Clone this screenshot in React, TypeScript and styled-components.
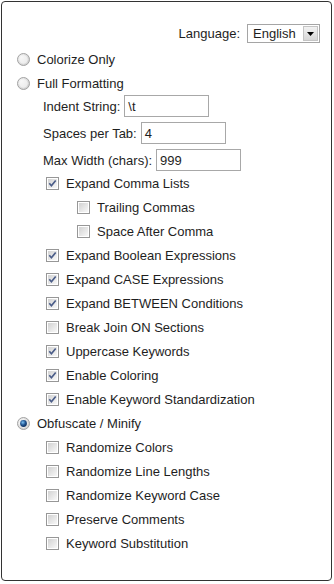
import React from "react";
import styled, { createGlobalStyle } from "styled-components";

const Global = createGlobalStyle`
  html, body { margin: 0; padding: 0; background: #fff; }
  body {
    font-family: "Liberation Sans", Arial, sans-serif;
    font-size: 13px;
    color: #1e1e1e;
  }
`;

const Panel = styled.div`
  box-sizing: border-box;
  margin: 1px 0 0 1px;
  width: 331px;
  height: 580px;
  border: 1px solid #333;
  border-radius: 4px;
  padding: 22px 11px 0 0;
  display: flex;
  flex-direction: column;
`;

const LangRow = styled.div`
  display: flex;
  justify-content: flex-end;
  align-items: center;
  gap: 7px;
  height: 19px;
  margin-bottom: 4px;
`;

const Select = styled.div`
  box-sizing: border-box;
  width: 73px;
  height: 19px;
  border: 1px solid #a5a5a5;
  display: flex;
  align-items: center;
  justify-content: space-between;
  padding: 0 1px 0 5px;
  background: #fff;
`;

const DropButton = styled.div`
  box-sizing: border-box;
  width: 15px;
  height: 15px;
  border: 1px solid #c4c4c4;
  background: linear-gradient(#f2f2f2, #d6d6d6);
  display: flex;
  align-items: center;
  justify-content: center;
`;

const Row = styled.div<{ $indent: number }>`
  display: flex;
  align-items: center;
  height: 24px;
  padding-left: ${(p) => p.$indent}px;
  gap: 7px;
`;

const InputGroup = styled.div`
  display: flex;
  flex-direction: column;
  gap: 5px;
`;

const InputRow = styled.div`
  display: flex;
  align-items: center;
  height: 22px;
  padding-left: 41px;
  gap: 4px;
`;

const TextBox = styled.div`
  box-sizing: border-box;
  width: 85px;
  height: 22px;
  border: 1px solid #a8a8a8;
  padding: 0 3px;
  display: flex;
  align-items: center;
  background: #fff;
`;

const Label = styled.span`
  white-space: nowrap;
`;

const Radio = ({ checked }: { checked?: boolean }) => (
  <svg width="13" height="13" viewBox="0 0 13 13">
    <defs>
      <radialGradient id="rgBase" cx="0.3" cy="0.3" r="0.85">
        <stop offset="0" stopColor="#f4f4f4" />
        <stop offset="1" stopColor="#cdcdcd" />
      </radialGradient>
      <radialGradient id="rgDot" cx="0.4" cy="0.35" r="0.7">
        <stop offset="0" stopColor="#7cc0f2" />
        <stop offset="0.55" stopColor="#1f538f" />
        <stop offset="1" stopColor="#0d2d5a" />
      </radialGradient>
    </defs>
    <circle cx="6.5" cy="6.5" r="6" fill="url(#rgBase)" stroke="#a3a3a3" strokeWidth="1" />
    <circle cx="6.5" cy="6.5" r="4.2" fill="#fafafa" opacity="0.6" />
    {checked && <circle cx="6.5" cy="6.5" r="3.4" fill="url(#rgDot)" />}
  </svg>
);

const Check = ({ checked }: { checked?: boolean }) => (
  <svg width="13" height="13" viewBox="0 0 13 13">
    <defs>
      <linearGradient id="cbFill" x1="0" y1="0" x2="1" y2="1">
        <stop offset="0" stopColor="#d2d2d2" />
        <stop offset="1" stopColor="#f8f8f8" />
      </linearGradient>
    </defs>
    <rect x="0.5" y="0.5" width="12" height="12" fill="#fff" stroke="#979797" />
    <rect x="2" y="2" width="9" height="9" fill="url(#cbFill)" />
    {checked && (
      <path d="M3.3 6.3 L5.4 8.7 L9.7 3.5" fill="none" stroke="#4a5c88" strokeWidth="1.7" />
    )}
  </svg>
);

const RadioOpt = ({ label, checked }: { label: string; checked?: boolean }) => (
  <Row $indent={15}>
    <Radio checked={checked} />
    <Label>{label}</Label>
  </Row>
);

const CheckOpt = ({ label, checked, indent }: { label: string; checked?: boolean; indent: number }) => (
  <Row $indent={indent}>
    <Check checked={checked} />
    <Label>{label}</Label>
  </Row>
);

const formatting: { label: string; checked: boolean; indent: number }[] = [
  { label: "Expand Comma Lists", checked: true, indent: 44 },
  { label: "Trailing Commas", checked: false, indent: 75 },
  { label: "Space After Comma", checked: false, indent: 75 },
  { label: "Expand Boolean Expressions", checked: true, indent: 44 },
  { label: "Expand CASE Expressions", checked: true, indent: 44 },
  { label: "Expand BETWEEN Conditions", checked: true, indent: 44 },
  { label: "Break Join ON Sections", checked: false, indent: 44 },
  { label: "Uppercase Keywords", checked: true, indent: 44 },
  { label: "Enable Coloring", checked: true, indent: 44 },
  { label: "Enable Keyword Standardization", checked: true, indent: 44 },
];

const obfuscation = [
  "Randomize Colors",
  "Randomize Line Lengths",
  "Randomize Keyword Case",
  "Preserve Comments",
  "Keyword Substitution",
];

const inputs = [
  { label: "Indent String:", value: "\\t" },
  { label: "Spaces per Tab:", value: "4" },
  { label: "Max Width (chars):", value: "999" },
];

export default function App() {
  return (
    <>
      <Global />
      <Panel>
        <LangRow>
          <Label>Language:</Label>
          <Select>
            <span>English</span>
            <DropButton>
              <svg width="7" height="4" viewBox="0 0 7 4">
                <path d="M0 0 H7 L3.5 4 Z" fill="#000" />
              </svg>
            </DropButton>
          </Select>
        </LangRow>
        <RadioOpt label="Colorize Only" />
        <RadioOpt label="Full Formatting" />
        <InputGroup>
          {inputs.map((i) => (
            <InputRow key={i.label}>
              <Label>{i.label}</Label>
              <TextBox>{i.value}</TextBox>
            </InputRow>
          ))}
        </InputGroup>
        {formatting.map((o) => (
          <CheckOpt key={o.label} label={o.label} checked={o.checked} indent={o.indent} />
        ))}
        <RadioOpt label="Obfuscate / Minify" checked />
        {obfuscation.map((l) => (
          <CheckOpt key={l} label={l} indent={44} />
        ))}
      </Panel>
    </>
  );
}
